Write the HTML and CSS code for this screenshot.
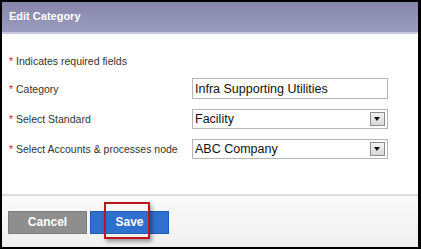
FILE: index.html
```html
<!DOCTYPE html>
<html lang="en">

<head>
    <meta charset="UTF-8">
    <meta name="viewport" content="width=device-width, initial-scale=1.0">
    <title>Edit Category</title>
    <link rel="stylesheet" href="styles.css">
</head>

<body>
    <div class="dialog">
        <div class="head">Edit Category</div>
        <div class="form">
            <p class="note"><span class="req">*</span> Indicates required fields</p>
            <div class="row">
                <label><span class="req">*</span> Category</label>
                <div class="field text">Infra Supporting Utilities</div>
            </div>
            <div class="row">
                <label><span class="req">*</span> Select Standard</label>
                <div class="field select">
                    <span>Facility</span>
                    <i class="arrow"></i>
                </div>
            </div>
            <div class="row">
                <label><span class="req">*</span> Select Accounts &amp; processes node</label>
                <div class="field select">
                    <span>ABC Company</span>
                    <i class="arrow"></i>
                </div>
            </div>
        </div>
        <div class="foot">
            <a href="javascript:;" class="btn cancel">Cancel</a>
            <a href="javascript:;" class="btn save">Save</a>
            <div class="mark"></div>
        </div>
    </div>
</body>

</html>
```

FILE: styles.css
```css
* {
    margin: 0;
    padding: 0;
    box-sizing: border-box;
}

body {
    background: #000;
    font-family: "Liberation Sans", Arial, sans-serif;
    color: #333;
}

.dialog {
    width: 416px;
    height: 245px;
    margin: 2px 3px 2px 2px;
    background: #fff;
    display: flex;
    flex-direction: column;
}

.head {
    height: 32px;
    padding-left: 7px;
    line-height: 29px;
    font-size: 11px;
    font-weight: bold;
    color: #fff;
    background: linear-gradient(#8585a9, #9c9cc1);
    border-bottom: 2px solid #c9c9e2;
}

.form {
    height: 160px;
    padding: 20px 0 0 7px;
    font-size: 10.5px;
}

.req {
    color: #d22;
}

.note {
    line-height: 14px;
    margin-bottom: 10px;
}

.row {
    display: flex;
    align-items: center;
    height: 21px;
    margin-bottom: 9px;
}

.row label {
    width: 183px;
}

.field {
    width: 196px;
    height: 21px;
    border: 1px solid #b5b5b5;
    font-size: 12.5px;
    color: #111;
    padding-left: 2px;
    display: flex;
    align-items: center;
}

.select {
    height: 20px;
    justify-content: space-between;
    padding-right: 2px;
}

.arrow {
    width: 15px;
    height: 14px;
    border: 1px solid #8c8c8c;
    background: linear-gradient(#f4f4f4, #d8d8d8);
    position: relative;
}

.arrow::after {
    content: "";
    position: absolute;
    left: 3px;
    top: 4px;
    border-left: 3.5px solid transparent;
    border-right: 3.5px solid transparent;
    border-top: 4px solid #111;
}

.foot {
    flex: 1;
    border-top: 2px solid #dcdcdc;
    background: linear-gradient(#fafafa, #efefef);
    padding: 15px 0 0 6px;
    display: flex;
    gap: 3px;
    align-items: flex-start;
    position: relative;
}

.btn {
    width: 79px;
    height: 23px;
    line-height: 21px;
    text-align: center;
    font-size: 12px;
    font-weight: bold;
    color: #fff;
    text-decoration: none;
}

.cancel {
    background: #8e8e8e;
    border: 1px solid #7a7a7a;
}

.save {
    background: #2f6fcd;
    border: 1px solid #1f5bb5;
}

.mark {
    position: absolute;
    left: 102px;
    top: 6px;
    width: 46px;
    height: 37px;
    border: 2px solid #c0141d;
    box-shadow: 2px 3px 4px rgba(0, 0, 0, 0.35);
}
```
